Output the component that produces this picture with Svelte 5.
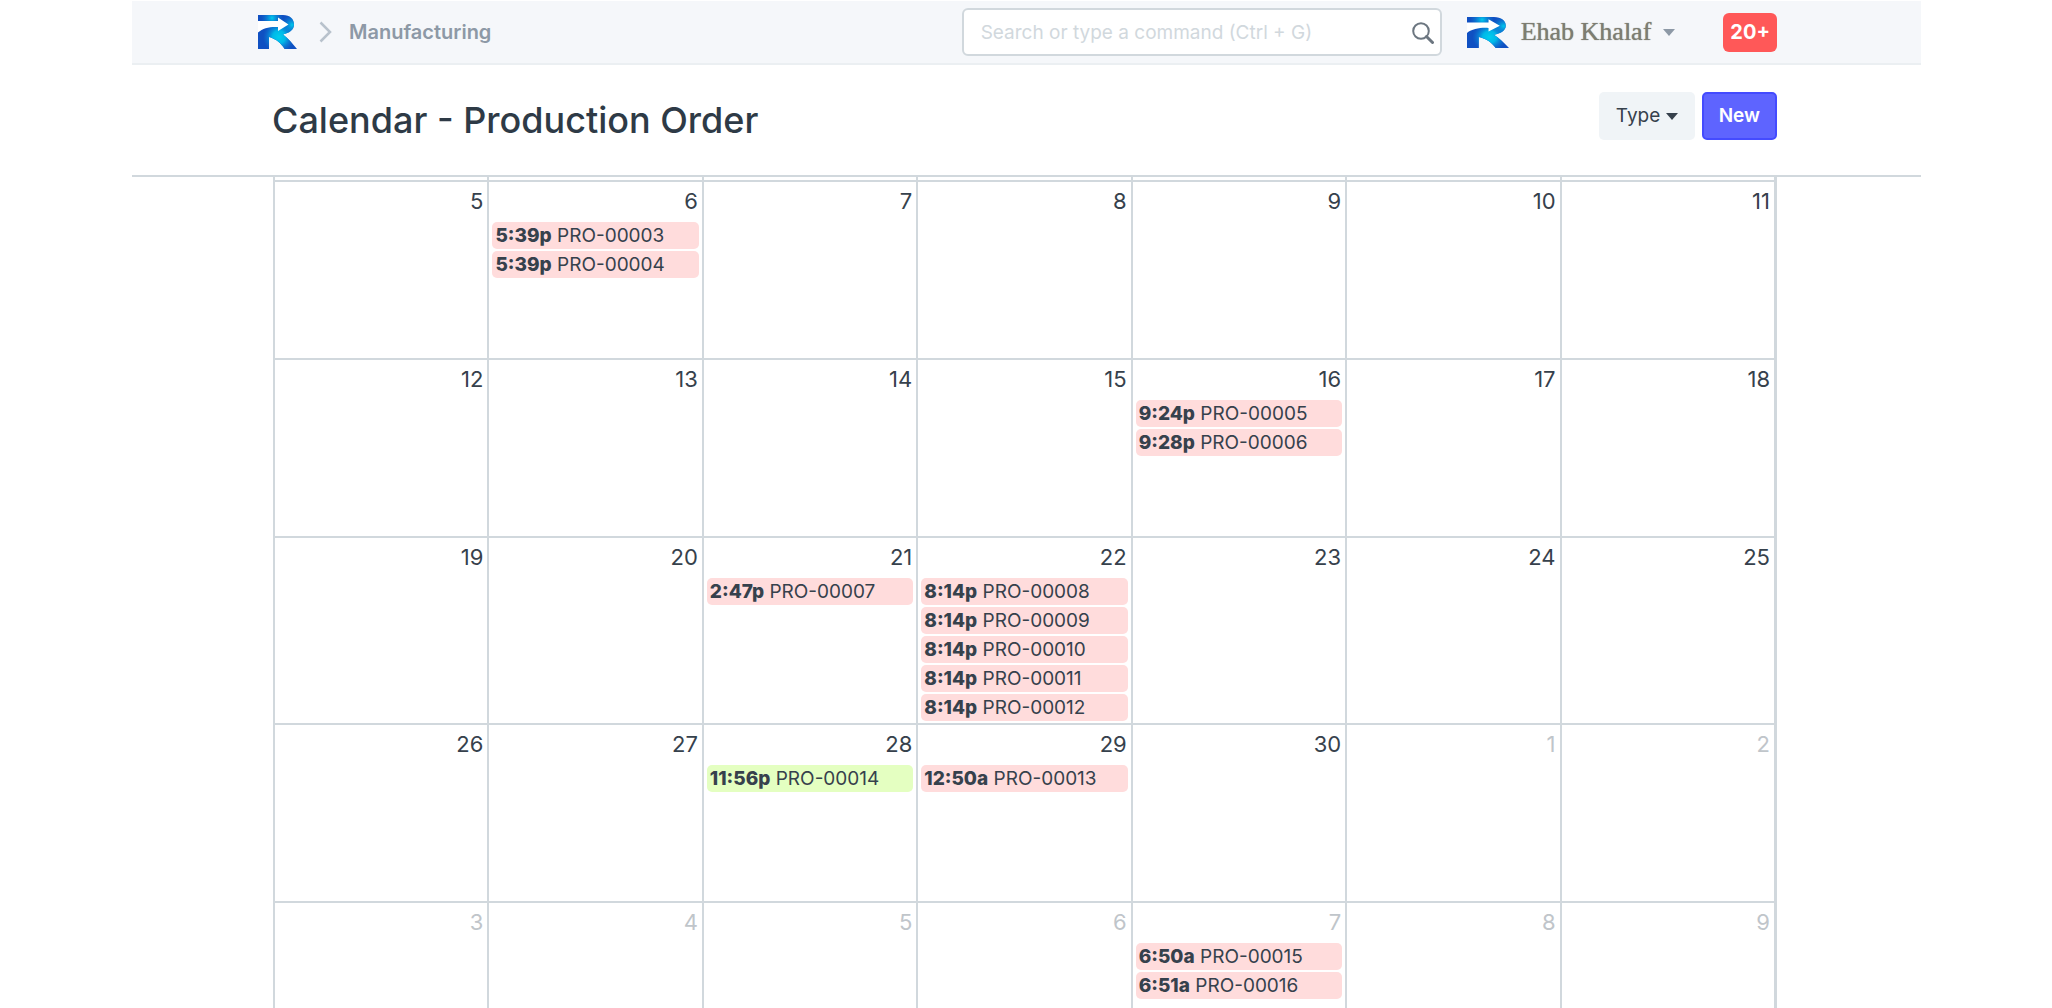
<script>
  const event = (time, id, done = false) => ({ time, id: `PRO-${id}`, done });

  const day = (number, events = [], muted = false) => ({ number, events, muted });

  const weeks = [
    [
      day(5),
      day(6, [event('5:39p', '00003'), event('5:39p', '00004')]),
      day(7), day(8), day(9), day(10), day(11)
    ],
    [
      day(12), day(13), day(14), day(15),
      day(16, [event('9:24p', '00005'), event('9:28p', '00006')]),
      day(17), day(18)
    ],
    [
      day(19), day(20),
      day(21, [event('2:47p', '00007')]),
      day(22, [
        event('8:14p', '00008'),
        event('8:14p', '00009'),
        event('8:14p', '00010'),
        event('8:14p', '00011'),
        event('8:14p', '00012')
      ]),
      day(23), day(24), day(25)
    ],
    [
      day(26), day(27),
      day(28, [event('11:56p', '00014', true)]),
      day(29, [event('12:50a', '00013')]),
      day(30), day(1, [], true), day(2, [], true)
    ],
    [
      day(3, [], true), day(4, [], true), day(5, [], true), day(6, [], true),
      day(7, [event('6:50a', '00015'), event('6:51a', '00016')], true),
      day(8, [], true), day(9, [], true)
    ]
  ];
</script>

{#snippet logo(id)}
  <svg viewBox="0 0 39 34" preserveAspectRatio="none" aria-hidden="true">
    <defs>
      <radialGradient id="{id}-leg" gradientUnits="userSpaceOnUse" cx="21" cy="22" r="16">
        <stop offset="0" stop-color="#00cdee" />
        <stop offset="0.4" stop-color="#00b8e8" />
        <stop offset="1" stop-color="#0d7fd8" stop-opacity="0" />
      </radialGradient>
      <radialGradient id="{id}-bowl" gradientUnits="userSpaceOnUse" cx="34" cy="10" r="11">
        <stop offset="0" stop-color="#00c8ec" />
        <stop offset="1" stop-color="#0d7fd8" stop-opacity="0" />
      </radialGradient>
      <radialGradient id="{id}-top" gradientUnits="userSpaceOnUse" cx="14" cy="3" r="11">
        <stop offset="0" stop-color="#00cdee" />
        <stop offset="1" stop-color="#0d7fd8" stop-opacity="0" />
      </radialGradient>
      <clipPath id="{id}-shape">
        <path d="M0 0H25C32 0 36 4 36 9.5C36 15 31 18 25 19.5C30 23 34 28 39 34H26.5C23 28 18 24 11 22V34H0Z" />
      </clipPath>
    </defs>
    <g clip-path="url(#{id}-shape)">
      <rect width="39" height="34" fill="#0f50c2" />
      <rect width="39" height="34" fill="url(#{id}-leg)" />
      <rect width="39" height="34" fill="url(#{id}-bowl)" />
      <rect width="39" height="34" fill="url(#{id}-top)" />
    </g>
    <path d="M0 6H20V2.5L30.5 9.5L20 16V12C12 11.5 5 13 0 17.500Z" fill="#fff" />
  </svg>
{/snippet}

<div class="page">
  <header class="navbar">
    <a class="brand" href="#home" aria-label="Home">{@render logo('brand')}</a>
    <svg class="chevron" viewBox="0 0 13 22" aria-hidden="true">
      <path d="M1.500 1.500L11 11L1.500 20.500" fill="none" stroke="#b8c2cc" stroke-width="2.500" />
    </svg>
    <a class="crumb" href="#manufacturing">Manufacturing</a>

    <div class="search">
      <input type="text" aria-label="Search" placeholder="Search or type a command (Ctrl + G)" />
      <svg viewBox="0 0 22 22" aria-hidden="true">
        <circle cx="9" cy="9" r="7.800" fill="none" stroke="#6c7680" stroke-width="2" />
        <path d="M14.500 14.500L20.500 20.500" stroke="#6c7680" stroke-width="3" stroke-linecap="round" />
      </svg>
    </div>

    <button class="user" type="button">
      <span class="avatar">{@render logo('avatar')}</span>
      <span class="name">Ehab Khalaf</span>
      <span class="caret"></span>
    </button>
    <button class="badge" type="button">20+</button>
  </header>

  <div class="page-head">
    <h1>Calendar - Production Order</h1>
    <div class="actions">
      <button class="type" type="button">Type <span class="caret"></span></button>
      <button class="new" type="button">New</button>
    </div>
  </div>

  <main>
    <table>
      <tbody>
        <tr class="strip">
          {#each weeks[0] as d (d.number)}<td></td>{/each}
        </tr>
        {#each weeks as week}
          <tr class="week">
            {#each week as d}
              <td>
                <div class="number" class:muted={d.muted}>{d.number}</div>
                {#if d.events.length}
                  <div class="events">
                    {#each d.events as e}
                      <a class="event" class:done={e.done} href="#{e.id}"><strong>{e.time}</strong> {e.id}</a>
                    {/each}
                  </div>
                {/if}
              </td>
            {/each}
          </tr>
        {/each}
      </tbody>
    </table>
  </main>
</div>

<style>
  :global(body) {
    background: #fff;
  }

  .page {
    box-sizing: border-box;
    height: 100vh;
    padding: 1px 131px 0 132px;
    display: flex;
    flex-direction: column;
    overflow: hidden;
    font-family: Inter, 'Liberation Sans', sans-serif;
    font-size: 19px;
    line-height: 24px;
    color: #36414c;
  }

  a {
    color: inherit;
    text-decoration: none;
  }

  button,
  input {
    box-sizing: border-box;
    margin: 0;
    border: 0;
    font: inherit;
  }

  svg {
    display: block;
  }

  .navbar {
    flex: none;
    box-sizing: border-box;
    height: 64px;
    padding: 0 144px 0 126px;
    display: flex;
    align-items: center;
    background: #f5f7fa;
    border-bottom: 2px solid #ebeff2;
  }

  .brand svg {
    width: 39px;
    height: 34px;
  }

  .chevron {
    width: 13px;
    height: 22px;
    margin: 0 17px 0 22px;
  }

  .crumb {
    font-size: 20px;
    font-weight: 600;
    color: #8d99a6;
  }

  .search {
    position: relative;
    width: 480px;
    margin-left: auto;
  }

  .search input {
    display: block;
    width: 100%;
    height: 48px;
    padding: 0 48px 0 17px;
    border: 2px solid #d1d8dd;
    border-radius: 6px;
    background: #fff;
    color: #36414c;
  }

  .search input::placeholder {
    color: #d1d8dd;
    opacity: 1;
  }

  .search svg {
    position: absolute;
    right: 8px;
    top: 14px;
    width: 22px;
    height: 22px;
  }

  .user {
    display: flex;
    align-items: center;
    margin: 0 48px 0 25px;
    padding: 0;
    background: none;
    color: #8d99a6;
  }

  .avatar svg {
    width: 42px;
    height: 31px;
  }

  .name {
    margin: 0 12px;
    font-family: 'Liberation Serif', serif;
    font-size: 26px;
    color: #7d7d72;
    text-shadow: 0 0 1px #7d7d72;
  }

  .caret {
    display: inline-block;
    border: 6px solid transparent;
    border-top: 7px solid currentColor;
    border-bottom: 0;
    vertical-align: 2px;
  }

  .badge {
    height: 39px;
    padding: 0 7px;
    border-radius: 6px;
    background: #ff5858;
    color: #fff;
    font-size: 20px;
    font-weight: 700;
  }

  .page-head {
    flex: none;
    box-sizing: border-box;
    height: 112px;
    padding: 0 144px 8px 140px;
    display: flex;
    align-items: center;
    justify-content: space-between;
    border-bottom: 2px solid #d1d8dd;
  }

  h1 {
    margin: 8px 0 0;
    font-size: 36px;
    line-height: 48px;
    font-weight: 500;
    color: #2e3a46;
  }

  .actions {
    display: flex;
    gap: 7px;
  }

  .actions button {
    height: 48px;
    padding: 0 17px;
    border-radius: 5px;
  }

  .actions .type {
    background: #f0f4f7;
    color: #36414c;
  }

  .actions .new {
    border: 2px solid #444bff;
    padding: 0 15px;
    background: #5e64ff;
    color: #fff;
    font-weight: 600;
  }

  main {
    flex: 1;
    min-height: 0;
    overflow: hidden;
    padding: 0 144px 0 141px;
  }

  table {
    width: 100%;
    table-layout: fixed;
    border-spacing: 0;
    border-right: 3px solid #d1d8dd;
  }

  td {
    padding: 0;
    border-left: 2px solid #d1d8dd;
    vertical-align: top;
  }

  .strip td {
    height: 3px;
  }

  .week td {
    box-sizing: border-box;
    height: 178px;
    padding: 5px 3px 2px;
    border-top: 2px solid #d1d8dd;
  }

  .number {
    height: 35px;
    padding-right: 1px;
    box-sizing: border-box;
    font-size: 22px;
    line-height: 28px;
    text-align: right;
  }

  .muted {
    color: #c0c5ca;
  }

  .events {
    display: grid;
    gap: 2px;
  }

  .event {
    height: 27px;
    padding: 0 3px;
    border-radius: 5px;
    background: #ffdcdc;
    font-size: 19px;
    line-height: 27px;
    white-space: nowrap;
    overflow: hidden;
  }

  .event strong {
    font-weight: 800;
  }

  .event.done {
    background: #e4ffc1;
  }
</style>
